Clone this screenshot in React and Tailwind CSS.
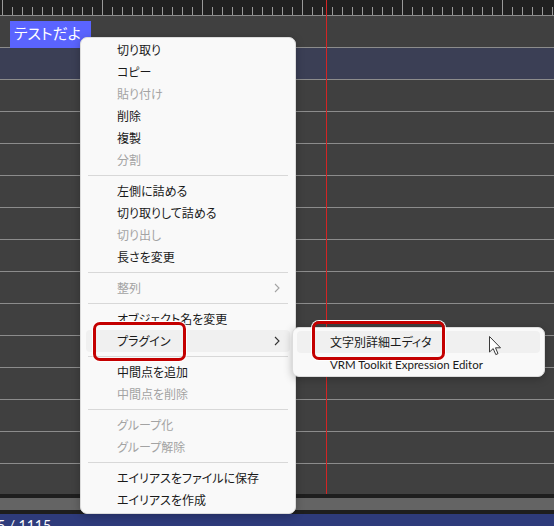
import React from 'react'

const UI_FONT = "font-['Lato','Noto_Sans_CJK_JP',sans-serif] [font-feature-settings:'palt']";

const MENU = [
  { label: '切り取り' },
  { label: 'コピー' },
  { label: '貼り付け', disabled: true },
  { label: '削除' },
  { label: '複製' },
  { label: '分割', disabled: true },
  { sep: true },
  { label: '左側に詰める' },
  { label: '切り取りして詰める' },
  { label: '切り出し', disabled: true },
  { label: '長さを変更' },
  { sep: true },
  { label: '整列', disabled: true, sub: true },
  { sep: true },
  { label: 'オブジェクト名を変更' },
  { label: 'プラグイン', sub: true, active: true },
  { sep: true },
  { label: '中間点を追加' },
  { label: '中間点を削除', disabled: true },
  { sep: true },
  { label: 'グループ化', disabled: true },
  { label: 'グループ解除', disabled: true },
  { sep: true },
  { label: 'エイリアスをファイルに保存' },
  { label: 'エイリアスを作成' },
];

const Ruler = () => {
  const ticks = [];
  for (let x = 2; x < 554; x += 10) {
    const major = (x - 2) % 100 === 0;
    ticks.push(<line key={x} x1={x + 0.5} x2={x + 0.5} y1={major ? 0 : 7} y2={15} stroke="#9a9a9a" strokeWidth="1" />);
  }
  return (
    <div className="h-[15px] bg-[#202020] border-b border-[#8c8c8c] box-content">
      <svg width="554" height="15" className="block">{ticks}</svg>
    </div>
  );
};

const Chevron = ({ color }) => (
  <svg width="6" height="10" viewBox="0 0 6 10" className="block">
    <polyline points="1,1 5,5 1,9" fill="none" stroke={color} strokeWidth="1.1" />
  </svg>
);

const ContextMenu = () => (
  <div className={`absolute left-[80px] top-[37px] w-[216px] bg-[#f9f9f9] border border-[#dcdcdc] rounded-[7px] shadow-[0_2px_8px_rgba(0,0,0,0.25)] pt-[1px] pb-[2px] ${UI_FONT}`}>
    {MENU.map((it, i) =>
      it.sep ? (
        <div key={i} className="mx-[7px] my-[4px] h-px bg-[#d8d8d8]" />
      ) : (
        <div
          key={i}
          className={`mx-[5px] h-[22px] rounded-[4px] pl-[31px] pr-[10px] flex items-center justify-between text-[12px] ${
            it.active ? 'bg-[#f0f0f0]' : ''
          } ${it.disabled ? 'text-[#a3a3a3]' : 'text-[#1a1a1a]'}`}
        >
          <span className="pt-[1px]">{it.label}</span>
          {it.sub && <Chevron color={it.disabled ? '#a3a3a3' : '#333333'} />}
        </div>
      )
    )}
  </div>
);

const SubMenu = () => (
  <div className={`absolute left-[292px] top-[327px] w-[253px] bg-[#f9f9f9] border border-[#dcdcdc] rounded-[7px] shadow-[0_2px_8px_rgba(0,0,0,0.25)] pt-[3px] pb-[1px] ${UI_FONT}`}>
    <div className="mx-[4px] h-[22px] rounded-[4px] bg-[#f0f0f0] pl-[33px] pt-[1px] flex items-center text-[12px] text-[#1a1a1a]">
      文字別詳細エディタ
    </div>
    <div className="mx-[4px] h-[22px] pl-[33px] pt-[1px] flex items-center text-[11.5px] text-[#1a1a1a]">
      VRM Toolkit Expression Editor
    </div>
  </div>
);

const Cursor = () => (
  <svg width="13" height="20" viewBox="0 0 13 20" className="absolute left-[489px] top-[336px]">
    <path d="M0.5,0.5 L0.5,16 L4.2,12.6 L6.8,18.6 L9,17.6 L6.5,11.8 L11.5,11.8 Z" fill="#ffffff" stroke="#3a3a3a" strokeWidth="1" strokeLinejoin="round" />
  </svg>
);

const Row = ({ selected, children }) => (
  <div className={`h-[32px] border-b border-[#8c8c8c] ${selected ? 'bg-[#3b3f55]' : 'bg-[#404040]'}`}>
    {children}
  </div>
);

export default function App() {
  const rows = Array.from({ length: 12 });
  return (
    <div className="relative w-[554px] h-[526px] overflow-hidden bg-[#404040]">
      <Ruler />
      <Row>
        <div className="pt-[5px] pl-[10px]">
          <div className={`w-[81px] h-[27px] bg-[#5a64ff] text-white text-[15px] leading-[24px] pl-[4px] ${UI_FONT}`}>
            テストだよ
          </div>
        </div>
      </Row>
      <Row selected />
      {rows.map((_, i) => (
        <Row key={i} />
      ))}
      <div className="h-[30px] bg-[#404040]" />
      <div className="h-[4px] bg-[#1e1e1e]" />
      <div className="h-[12px] bg-[#646464]" />
      <div className="h-[4px] bg-[#1e1e1e]" />
      <div className={`h-[30px] bg-[#2e3b7b] text-white text-[14px] leading-[20px] pt-[1px] -ml-[3px] ${UI_FONT}`}>
        5 / 1115
      </div>

      {/* playhead */}
      <div className="absolute left-[326px] top-0 w-px h-[494px] bg-[#d42424]" />

      <ContextMenu />
      <SubMenu />

      {/* highlight frames */}
      <div className="absolute left-[93px] top-[322px] w-[93px] h-[39px] border-[3px] border-[#c40000] rounded-[7px] ring-1 ring-white" />
      <div className="absolute left-[312px] top-[321px] w-[133px] h-[39px] border-[3px] border-[#c40000] rounded-[7px] ring-1 ring-white" />

      <Cursor />
    </div>
  );
}
